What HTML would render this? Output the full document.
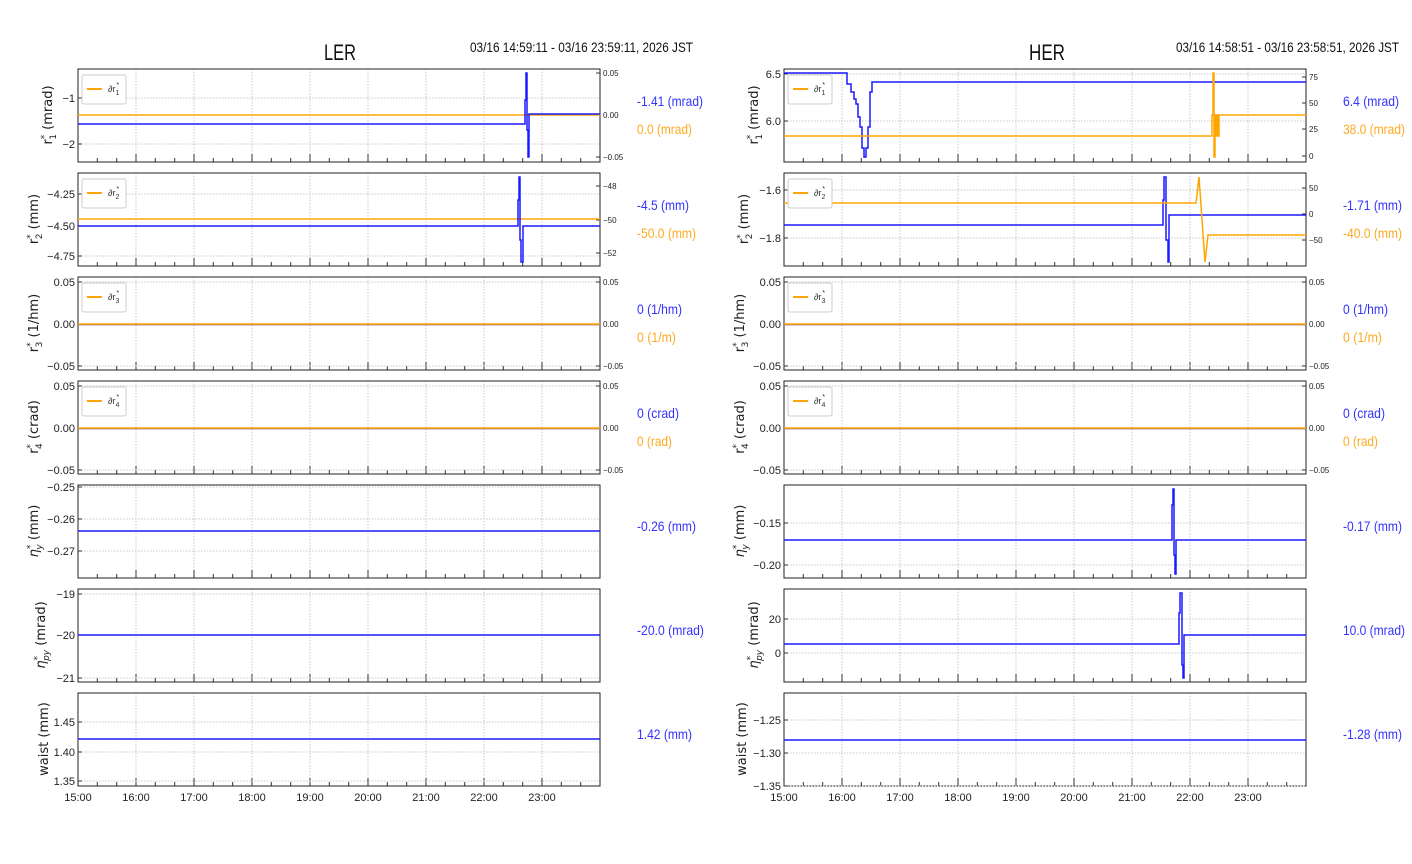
<!DOCTYPE html>
<html><head><meta charset="utf-8"><style>
html,body{margin:0;padding:0;background:#fff;}
svg{display:block;font-family:"Liberation Sans",sans-serif;}
.tk{font-size:11px;fill:#222;}
.tr{font-size:8px;fill:#222;}
.yl{font-size:13px;fill:#222;font-family:"DejaVu Sans","Liberation Sans",sans-serif;}
.vb{font-size:14px;fill:#3333ff;}
.vo{font-size:14px;fill:#ffaa22;}
.hg{stroke:#c8c8c8;stroke-width:1;stroke-dasharray:1.5 1.5;}
.b{fill:none;stroke:#1a1aff;stroke-width:1.5;}
.o{fill:none;stroke:#ffa500;stroke-width:1.5;}
.lg{font-size:9px;fill:#333;}
</style></head><body>
<svg width="1412" height="864" viewBox="0 0 1412 864" xmlns="http://www.w3.org/2000/svg">
<defs>
<g id="vg">
<path d="M58 0V93M116 0V93M174 0V93M232 0V93M290 0V93M348 0V93M406 0V93M464 0V93" stroke="#c8c8c8" stroke-dasharray="1.5 1.5" fill="none"/>
<path d="M58 93v-8M116 93v-8M174 93v-8M232 93v-8M290 93v-8M348 93v-8M406 93v-8M464 93v-8M19.3 93v-4M38.7 93v-4M77.3 93v-4M96.7 93v-4M135.3 93v-4M154.7 93v-4M193.3 93v-4M212.7 93v-4M251.3 93v-4M270.7 93v-4M309.3 93v-4M328.7 93v-4M367.3 93v-4M386.7 93v-4M425.3 93v-4M444.7 93v-4M483.3 93v-4M502.7 93v-4" stroke="#333" fill="none"/>
<rect x="0" y="0" width="522" height="93" fill="none" stroke="#222" stroke-width="1"/>
</g>
<g id="leg"><rect x="0" y="0" width="44" height="29" rx="2" fill="#fff" stroke="#ccc"/><path d="M5 14H20" stroke="#ffa500" stroke-width="2"/></g>
</defs>

<text x="340" y="60" font-size="22" text-anchor="middle" textLength="32" lengthAdjust="spacingAndGlyphs" fill="#111">LER</text>
<text x="470" y="52" font-size="14" textLength="223" lengthAdjust="spacingAndGlyphs" fill="#111">03/16 14:59:11 - 03/16 23:59:11, 2026 JST</text>
<text x="1047" y="60" font-size="22" text-anchor="middle" textLength="36" lengthAdjust="spacingAndGlyphs" fill="#111">HER</text>
<text x="1176" y="52" font-size="14" textLength="223" lengthAdjust="spacingAndGlyphs" fill="#111">03/16 14:58:51 - 03/16 23:58:51, 2026 JST</text>

<use href="#vg" x="78" y="69"/><use href="#vg" x="78" y="173"/><use href="#vg" x="78" y="277"/><use href="#vg" x="78" y="381"/><use href="#vg" x="78" y="485"/><use href="#vg" x="78" y="589"/><use href="#vg" x="78" y="693"/>
<use href="#vg" x="784" y="69"/><use href="#vg" x="784" y="173"/><use href="#vg" x="784" y="277"/><use href="#vg" x="784" y="381"/><use href="#vg" x="784" y="485"/><use href="#vg" x="784" y="589"/><use href="#vg" x="784" y="693"/>

<path class="hg" d="M78 98H600M78 144H600M78 194H600M78 226H600M78 256H600M78 282H600M78 324H600M78 366H600M78 386H600M78 428H600M78 470H600M78 487H600M78 519H600M78 551H600M78 594H600M78 635H600M78 678H600M78 722H600M78 752H600M78 781H600"/>
<path class="hg" d="M784 74H1306M784 121H1306M784 190H1306M784 238H1306M784 282H1306M784 324H1306M784 366H1306M784 386H1306M784 428H1306M784 470H1306M784 523H1306M784 565H1306M784 619H1306M784 653H1306M784 720H1306M784 753H1306M784 786H1306"/>

<path stroke="#333" d="M78 98h4M78 144h4M78 194h4M78 226h4M78 256h4M78 282h4M78 324h4M78 366h4M78 386h4M78 428h4M78 470h4M78 487h4M78 519h4M78 551h4M78 594h4M78 635h4M78 678h4M78 722h4M78 752h4M78 781h4M600 73h-4M600 115h-4M600 157h-4M600 186h-4M600 220h-4M600 253h-4M600 282h-4M600 324h-4M600 366h-4M600 386h-4M600 428h-4M600 470h-4"/>
<path stroke="#333" d="M784 74h4M784 121h4M784 190h4M784 238h4M784 282h4M784 324h4M784 366h4M784 386h4M784 428h4M784 470h4M784 523h4M784 565h4M784 619h4M784 653h4M784 720h4M784 753h4M784 786h4M1306 77h-4M1306 103h-4M1306 129h-4M1306 156h-4M1306 188h-4M1306 214h-4M1306 240h-4M1306 282h-4M1306 324h-4M1306 366h-4M1306 386h-4M1306 428h-4M1306 470h-4"/>

<g class="tk" text-anchor="end">
<text x="75" y="102">−1</text><text x="75" y="148">−2</text>
<text x="75" y="198">−4.25</text><text x="75" y="230">−4.50</text><text x="75" y="260">−4.75</text>
<text x="75" y="286">0.05</text><text x="75" y="328">0.00</text><text x="75" y="370">−0.05</text>
<text x="75" y="390">0.05</text><text x="75" y="432">0.00</text><text x="75" y="474">−0.05</text>
<text x="75" y="491">−0.25</text><text x="75" y="523">−0.26</text><text x="75" y="555">−0.27</text>
<text x="75" y="598">−19</text><text x="75" y="639">−20</text><text x="75" y="682">−21</text>
<text x="75" y="726">1.45</text><text x="75" y="756">1.40</text><text x="75" y="785">1.35</text>
<text x="781" y="78">6.5</text><text x="781" y="125">6.0</text>
<text x="781" y="194">−1.6</text><text x="781" y="242">−1.8</text>
<text x="781" y="286">0.05</text><text x="781" y="328">0.00</text><text x="781" y="370">−0.05</text>
<text x="781" y="390">0.05</text><text x="781" y="432">0.00</text><text x="781" y="474">−0.05</text>
<text x="781" y="527">−0.15</text><text x="781" y="569">−0.20</text>
<text x="781" y="623">20</text><text x="781" y="657">0</text>
<text x="781" y="724">−1.25</text><text x="781" y="757">−1.30</text><text x="781" y="790">−1.35</text>
</g>
<g class="tr">
<text x="603" y="76">0.05</text><text x="603" y="118">0.00</text><text x="603" y="160">−0.05</text>
<text x="603" y="189">−48</text><text x="603" y="223">−50</text><text x="603" y="256">−52</text>
<text x="603" y="285">0.05</text><text x="603" y="327">0.00</text><text x="603" y="369">−0.05</text>
<text x="603" y="389">0.05</text><text x="603" y="431">0.00</text><text x="603" y="473">−0.05</text>
<text x="1309" y="80">75</text><text x="1309" y="106">50</text><text x="1309" y="132">25</text><text x="1309" y="159">0</text>
<text x="1309" y="191">50</text><text x="1309" y="217">0</text><text x="1309" y="243">−50</text>
<text x="1309" y="285">0.05</text><text x="1309" y="327">0.00</text><text x="1309" y="369">−0.05</text>
<text x="1309" y="389">0.05</text><text x="1309" y="431">0.00</text><text x="1309" y="473">−0.05</text>
</g>

<g class="tk" text-anchor="middle">
<text x="78" y="801">15:00</text><text x="136" y="801">16:00</text><text x="194" y="801">17:00</text><text x="252" y="801">18:00</text><text x="310" y="801">19:00</text><text x="368" y="801">20:00</text><text x="426" y="801">21:00</text><text x="484" y="801">22:00</text><text x="542" y="801">23:00</text>
<text x="784" y="801">15:00</text><text x="842" y="801">16:00</text><text x="900" y="801">17:00</text><text x="958" y="801">18:00</text><text x="1016" y="801">19:00</text><text x="1074" y="801">20:00</text><text x="1132" y="801">21:00</text><text x="1190" y="801">22:00</text><text x="1248" y="801">23:00</text>
</g>

<path class="o" d="M78 115H600"/>
<path class="b" d="M78 124H525V100H526V73H527V130H528V157H529V114H600"/>
<path class="o" d="M78 219H600"/>
<path class="b" d="M78 226H518V200H519V177H520V240H521V262H523V226H600"/>
<path d="M78 324H600" stroke="#ffa500" stroke-width="1.5"/><path d="M78 325H600" stroke="#b07060" stroke-width="0.7"/>
<path d="M78 428H600" stroke="#ffa500" stroke-width="1.5"/><path d="M78 429H600" stroke="#b07060" stroke-width="0.7"/>
<path class="b" d="M78 531H600"/>
<path class="b" d="M78 635H600"/>
<path class="b" d="M78 739H600"/>

<path class="b" d="M784 73H847V84H851V92H854V99H856V104H858V117H860V127H862V148H864V157H866V148H868V127H870V92H872V82H1306"/>
<path class="o" d="M784 136H1212V115H1213V73H1214V157H1215V115H1216V136H1217V115H1218V136H1219V115H1306"/>
<path class="b" d="M784 225H1163V200H1164V177H1166V240H1168V262H1169V215H1306"/>
<path class="o" d="M784 203H1196L1199 177L1205 262L1208 235H1306"/>
<path d="M784 324H1306" stroke="#ffa500" stroke-width="1.5"/><path d="M784 325H1306" stroke="#b07060" stroke-width="0.7"/>
<path d="M784 428H1306" stroke="#ffa500" stroke-width="1.5"/><path d="M784 429H1306" stroke="#b07060" stroke-width="0.7"/>
<path class="b" d="M784 540H1172V505H1173V489H1174V555H1175V574H1176V540H1306"/>
<path class="b" d="M784 644H1179V613H1180V593H1182V665H1183V678H1184V635H1306"/>
<path class="b" d="M784 740H1306"/>

<use href="#leg" x="82" y="75"/><text class="lg" x="108" y="92">∂r<tspan dy="3" font-size="7">1</tspan><tspan dy="-8" dx="-3" font-size="7">*</tspan></text>
<use href="#leg" x="82" y="179"/><text class="lg" x="108" y="196">∂r<tspan dy="3" font-size="7">2</tspan><tspan dy="-8" dx="-3" font-size="7">*</tspan></text>
<use href="#leg" x="82" y="283"/><text class="lg" x="108" y="300">∂r<tspan dy="3" font-size="7">3</tspan><tspan dy="-8" dx="-3" font-size="7">*</tspan></text>
<use href="#leg" x="82" y="387"/><text class="lg" x="108" y="404">∂r<tspan dy="3" font-size="7">4</tspan><tspan dy="-8" dx="-3" font-size="7">*</tspan></text>
<use href="#leg" x="788" y="75"/><text class="lg" x="814" y="92">∂r<tspan dy="3" font-size="7">1</tspan><tspan dy="-8" dx="-3" font-size="7">*</tspan></text>
<use href="#leg" x="788" y="179"/><text class="lg" x="814" y="196">∂r<tspan dy="3" font-size="7">2</tspan><tspan dy="-8" dx="-3" font-size="7">*</tspan></text>
<use href="#leg" x="788" y="283"/><text class="lg" x="814" y="300">∂r<tspan dy="3" font-size="7">3</tspan><tspan dy="-8" dx="-3" font-size="7">*</tspan></text>
<use href="#leg" x="788" y="387"/><text class="lg" x="814" y="404">∂r<tspan dy="3" font-size="7">4</tspan><tspan dy="-8" dx="-3" font-size="7">*</tspan></text>

<g class="yl" text-anchor="middle">
<text transform="translate(52 115) rotate(-90)">r<tspan font-size="9" dy="-5">*</tspan><tspan font-size="9" dx="-5" dy="9">1</tspan><tspan dy="-4"> (mrad)</tspan></text>
<text transform="translate(38 219) rotate(-90)">r<tspan font-size="9" dy="-5">*</tspan><tspan font-size="9" dx="-5" dy="9">2</tspan><tspan dy="-4"> (mm)</tspan></text>
<text transform="translate(38 323) rotate(-90)">r<tspan font-size="9" dy="-5">*</tspan><tspan font-size="9" dx="-5" dy="9">3</tspan><tspan dy="-4"> (1/hm)</tspan></text>
<text transform="translate(38 427) rotate(-90)">r<tspan font-size="9" dy="-5">*</tspan><tspan font-size="9" dx="-5" dy="9">4</tspan><tspan dy="-4"> (crad)</tspan></text>
<text transform="translate(38 531) rotate(-90)"><tspan font-style="italic">η</tspan><tspan font-size="9" dy="-5">*</tspan><tspan font-size="9" dx="-5" dy="9" font-style="italic">y</tspan><tspan dy="-4"> (mm)</tspan></text>
<text transform="translate(45 635) rotate(-90)"><tspan font-style="italic">η</tspan><tspan font-size="9" dy="-5">*</tspan><tspan font-size="9" dx="-5" dy="9" font-style="italic">py</tspan><tspan dy="-4"> (mrad)</tspan></text>
<text transform="translate(48 739) rotate(-90)">waist (mm)</text>
<text transform="translate(758 115) rotate(-90)">r<tspan font-size="9" dy="-5">*</tspan><tspan font-size="9" dx="-5" dy="9">1</tspan><tspan dy="-4"> (mrad)</tspan></text>
<text transform="translate(748 219) rotate(-90)">r<tspan font-size="9" dy="-5">*</tspan><tspan font-size="9" dx="-5" dy="9">2</tspan><tspan dy="-4"> (mm)</tspan></text>
<text transform="translate(744 323) rotate(-90)">r<tspan font-size="9" dy="-5">*</tspan><tspan font-size="9" dx="-5" dy="9">3</tspan><tspan dy="-4"> (1/hm)</tspan></text>
<text transform="translate(744 427) rotate(-90)">r<tspan font-size="9" dy="-5">*</tspan><tspan font-size="9" dx="-5" dy="9">4</tspan><tspan dy="-4"> (crad)</tspan></text>
<text transform="translate(744 531) rotate(-90)"><tspan font-style="italic">η</tspan><tspan font-size="9" dy="-5">*</tspan><tspan font-size="9" dx="-5" dy="9" font-style="italic">y</tspan><tspan dy="-4"> (mm)</tspan></text>
<text transform="translate(758 635) rotate(-90)"><tspan font-style="italic">η</tspan><tspan font-size="9" dy="-5">*</tspan><tspan font-size="9" dx="-5" dy="9" font-style="italic">py</tspan><tspan dy="-4"> (mrad)</tspan></text>
<text transform="translate(746 739) rotate(-90)">waist (mm)</text>
</g>

<text class="vb" x="637" y="106" textLength="66" lengthAdjust="spacingAndGlyphs">-1.41 (mrad)</text>
<text class="vo" x="637" y="134" textLength="55" lengthAdjust="spacingAndGlyphs">0.0 (mrad)</text>
<text class="vb" x="637" y="210" textLength="52" lengthAdjust="spacingAndGlyphs">-4.5 (mm)</text>
<text class="vo" x="637" y="238" textLength="59" lengthAdjust="spacingAndGlyphs">-50.0 (mm)</text>
<text class="vb" x="637" y="314" textLength="45" lengthAdjust="spacingAndGlyphs">0 (1/hm)</text>
<text class="vo" x="637" y="342" textLength="39" lengthAdjust="spacingAndGlyphs">0 (1/m)</text>
<text class="vb" x="637" y="418" textLength="42" lengthAdjust="spacingAndGlyphs">0 (crad)</text>
<text class="vo" x="637" y="446" textLength="35" lengthAdjust="spacingAndGlyphs">0 (rad)</text>
<text class="vb" x="637" y="531" textLength="59" lengthAdjust="spacingAndGlyphs">-0.26 (mm)</text>
<text class="vb" x="637" y="635" textLength="67" lengthAdjust="spacingAndGlyphs">-20.0 (mrad)</text>
<text class="vb" x="637" y="739" textLength="55" lengthAdjust="spacingAndGlyphs">1.42 (mm)</text>
<text class="vb" x="1343" y="106" textLength="56" lengthAdjust="spacingAndGlyphs">6.4 (mrad)</text>
<text class="vo" x="1343" y="134" textLength="62" lengthAdjust="spacingAndGlyphs">38.0 (mrad)</text>
<text class="vb" x="1343" y="210" textLength="59" lengthAdjust="spacingAndGlyphs">-1.71 (mm)</text>
<text class="vo" x="1343" y="238" textLength="59" lengthAdjust="spacingAndGlyphs">-40.0 (mm)</text>
<text class="vb" x="1343" y="314" textLength="45" lengthAdjust="spacingAndGlyphs">0 (1/hm)</text>
<text class="vo" x="1343" y="342" textLength="39" lengthAdjust="spacingAndGlyphs">0 (1/m)</text>
<text class="vb" x="1343" y="418" textLength="42" lengthAdjust="spacingAndGlyphs">0 (crad)</text>
<text class="vo" x="1343" y="446" textLength="35" lengthAdjust="spacingAndGlyphs">0 (rad)</text>
<text class="vb" x="1343" y="531" textLength="59" lengthAdjust="spacingAndGlyphs">-0.17 (mm)</text>
<text class="vb" x="1343" y="635" textLength="62" lengthAdjust="spacingAndGlyphs">10.0 (mrad)</text>
<text class="vb" x="1343" y="739" textLength="59" lengthAdjust="spacingAndGlyphs">-1.28 (mm)</text>
</svg>
</body></html>
